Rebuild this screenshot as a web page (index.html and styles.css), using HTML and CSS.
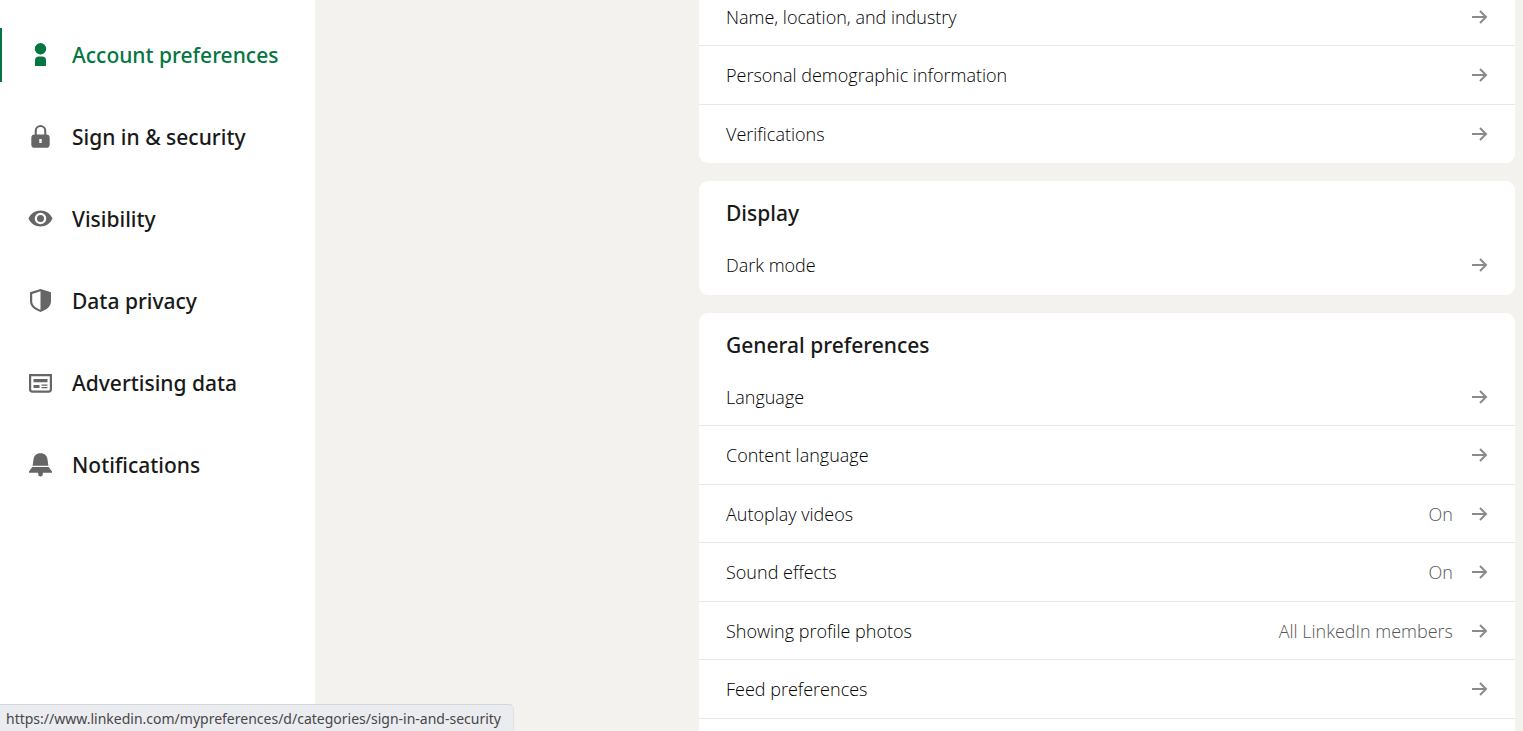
FILE: index.html
```html
<!DOCTYPE html>
<html lang="en">
<head>
<meta charset="utf-8">
<title>Settings</title>
<link rel="stylesheet" href="styles.css">
</head>
<body>
<svg class="defs" aria-hidden="true">
  <symbol id="arrow" viewBox="0 0 18 18"><path d="M1 9h14M9 3l6 6-6 6" fill="none" stroke="currentColor" stroke-width="2"/></symbol>
</svg>
<div class="page">
  <nav class="sidebar" aria-label="Settings">
    <a class="nav-item nav-item--active" href="#account" aria-current="page">
      <svg class="nav-icon" viewBox="0 0 26 26"><circle cx="13.500" cy="6.700" r="5.700"/><path d="M8 24v-5.500a4 4 0 0 1 4-4h3a4 4 0 0 1 4 4V24z"/></svg>
      <span>Account preferences</span>
    </a>
    <a class="nav-item" href="#security">
      <svg class="nav-icon" viewBox="0 0 26 26"><path transform="translate(.5 0)" fill-rule="evenodd" d="M7.200 10.500V6.800a5.800 5.800 0 0 1 11.600 0v3.700a3.400 3.400 0 0 1 3.400 3.400v6.500a3.400 3.400 0 0 1-3.400 3.400H7.200a3.400 3.400 0 0 1-3.400-3.400v-6.500a3.400 3.400 0 0 1 3.400-3.400zM9.300 10.500h7.400V6.800a3.700 3.700 0 0 0-7.400 0zM11.800 15v4h2.400v-4z"/></svg>
      <span>Sign in &amp; security</span>
    </a>
    <a class="nav-item" href="#visibility">
      <svg class="nav-icon" viewBox="0 0 26 26"><path transform="translate(.5 0)" fill-rule="evenodd" d="M13 4.500c5.400 0 9.600 2.900 12 8-2.400 5.100-6.600 8-12 8s-9.600-2.900-12-8c2.400-5.100 6.600-8 12-8zm0 2.200a5.800 5.800 0 1 0 0 11.600 5.800 5.800 0 0 0 0-11.600z"/><circle cx="13.500" cy="12.500" r="3.500"/></svg>
      <span>Visibility</span>
    </a>
    <a class="nav-item" href="#privacy">
      <svg class="nav-icon" viewBox="0 0 26 26"><path transform="translate(.5 0)" fill-rule="evenodd" d="M13 1l10.500 3.300v9c0 5-4.200 8.500-10.500 10.700C6.700 21.800 2.500 18.300 2.500 13.300v-9zm0 2.300L4.700 5.900v7.400c0 3.700 3 6.500 8.300 8.500z"/></svg>
      <span>Data privacy</span>
    </a>
    <a class="nav-item" href="#advertising">
      <svg class="nav-icon" viewBox="0 0 26 26"><g transform="translate(.5 1)"><path fill-rule="evenodd" d="M1.500 3h23v15.300a3.400 3.400 0 0 1-3.400 3.400H4.900a3.400 3.400 0 0 1-3.400-3.400zm2.200 2.200v13a1.300 1.300 0 0 0 1.300 1.300h16a1.300 1.300 0 0 0 1.300-1.300v-13z"/><path d="M6 8h14v3.200H6zM6 14h6v3H6zM14 13.500h6v1.300h-6zM14 16h6v1.300h-6z"/></g></svg>
      <span>Advertising data</span>
    </a>
    <a class="nav-item" href="#notifications">
      <svg class="nav-icon" viewBox="0 0 26 26"><path transform="translate(.5 1)" d="M13 .2c4.300 0 6.600 2.600 7 6.300l.9 6.200H5.100L6 6.500C6.400 2.800 8.700.2 13 .2zM4.800 14h16.400l3.300 4.500v1.200h-9.200v1.500a2.300 2.300 0 0 1-4.600 0v-1.500H1.500v-1.200z"/></svg>
      <span>Notifications</span>
    </a>
  </nav>
  <main class="content">
    <section class="card card--scrolled" aria-label="Profile information">
      <ul class="rows">
        <li><a class="row" href="#name"><span class="label">Name, location, and industry</span><svg class="arrow"><use href="#arrow"/></svg></a></li>
        <li><a class="row" href="#demographic"><span class="label">Personal demographic information</span><svg class="arrow"><use href="#arrow"/></svg></a></li>
        <li><a class="row" href="#verifications"><span class="label">Verifications</span><svg class="arrow"><use href="#arrow"/></svg></a></li>
      </ul>
    </section>
    <section class="card card--single">
      <h2 class="title">Display</h2>
      <ul class="rows">
        <li><a class="row" href="#dark"><span class="label">Dark mode</span><svg class="arrow"><use href="#arrow"/></svg></a></li>
      </ul>
    </section>
    <section class="card card--open">
      <h2 class="title">General preferences</h2>
      <ul class="rows">
        <li><a class="row" href="#language"><span class="label">Language</span><svg class="arrow"><use href="#arrow"/></svg></a></li>
        <li><a class="row" href="#content-language"><span class="label">Content language</span><svg class="arrow"><use href="#arrow"/></svg></a></li>
        <li><a class="row" href="#autoplay"><span class="label">Autoplay videos</span><span class="value">On</span><svg class="arrow"><use href="#arrow"/></svg></a></li>
        <li><a class="row" href="#sound"><span class="label">Sound effects</span><span class="value">On</span><svg class="arrow"><use href="#arrow"/></svg></a></li>
        <li><a class="row" href="#photos"><span class="label">Showing profile photos</span><span class="value">All LinkedIn members</span><svg class="arrow"><use href="#arrow"/></svg></a></li>
        <li><a class="row" href="#feed"><span class="label">Feed preferences</span><svg class="arrow"><use href="#arrow"/></svg></a></li>
      </ul>
    </section>
  </main>
</div>
<div class="status">https://www.linkedin.com/mypreferences/d/categories/sign-in-and-security</div>
</body>
</html>
```
FILE: styles.css
```css
* { box-sizing: border-box; }

body {
  margin: 0;
  overflow: hidden;
  background: #f3f2ee;
  color: #191919;
  font-family: "Noto Sans", "Open Sans", sans-serif;
  font-size: 18px;
}

a { color: inherit; text-decoration: none; }

.defs { display: none; }

.page {
  display: flex;
  justify-content: space-between;
  height: 100vh;
  padding-right: 8px;
}

.sidebar {
  display: flex;
  flex: 0 0 315px;
  flex-direction: column;
  gap: 28px;
  padding-top: 28px;
  background: #fff;
}

.nav-item {
  display: flex;
  align-items: center;
  gap: 19px;
  height: 54px;
  padding-left: 25px;
  border-left: 2px solid transparent;
  font-size: 21px;
  font-weight: 500;
}

.nav-item--active { border-color: #057642; color: #057642; }

.nav-icon {
  flex: none;
  width: 26px;
  height: 26px;
  fill: #666;
}

.nav-item--active .nav-icon { fill: #057642; }

.content {
  display: flex;
  flex: 0 1 816px;
  flex-direction: column;
  gap: 18px;
}

.card {
  flex: none;
  border-radius: 9px;
  background: #fff;
}

.card--scrolled { margin-top: -12px; }

.card--single { padding-bottom: 1px; }

.card--open { flex: 1 0 auto; border-radius: 9px 9px 0 0; }

.title {
  margin: 0;
  padding: 17px 27px 8px;
  font-size: 21px;
  font-weight: 500;
  line-height: 30px;
}

.rows {
  display: grid;
  grid-auto-rows: 58px 59px;
  margin: 0;
  padding: 0;
  list-style: none;
}

.row {
  display: flex;
  align-items: center;
  height: 100%;
  padding: 0 26px 0 27px;
  border-bottom: 1px solid #e8e8e8;
  font-family: "Open Sans", "Noto Sans", sans-serif;
  font-weight: 300;
}

.card:not(.card--open) li:last-child .row { border-bottom-color: transparent; }

.label { flex: 1; color: #000; }

.value { color: #555; }

.arrow {
  width: 18px;
  height: 18px;
  margin-left: 18px;
  color: #8a8a8a;
}

.status {
  position: fixed;
  bottom: 0;
  left: 0;
  padding: 4px 12px 3px 6px;
  border-top: 1px solid #d5d6d9;
  border-right: 1px solid #e0e1e4;
  border-top-right-radius: 5px;
  background: #ebecf0;
  color: #474747;
  font-size: 14px;
  line-height: 19px;
}
```
